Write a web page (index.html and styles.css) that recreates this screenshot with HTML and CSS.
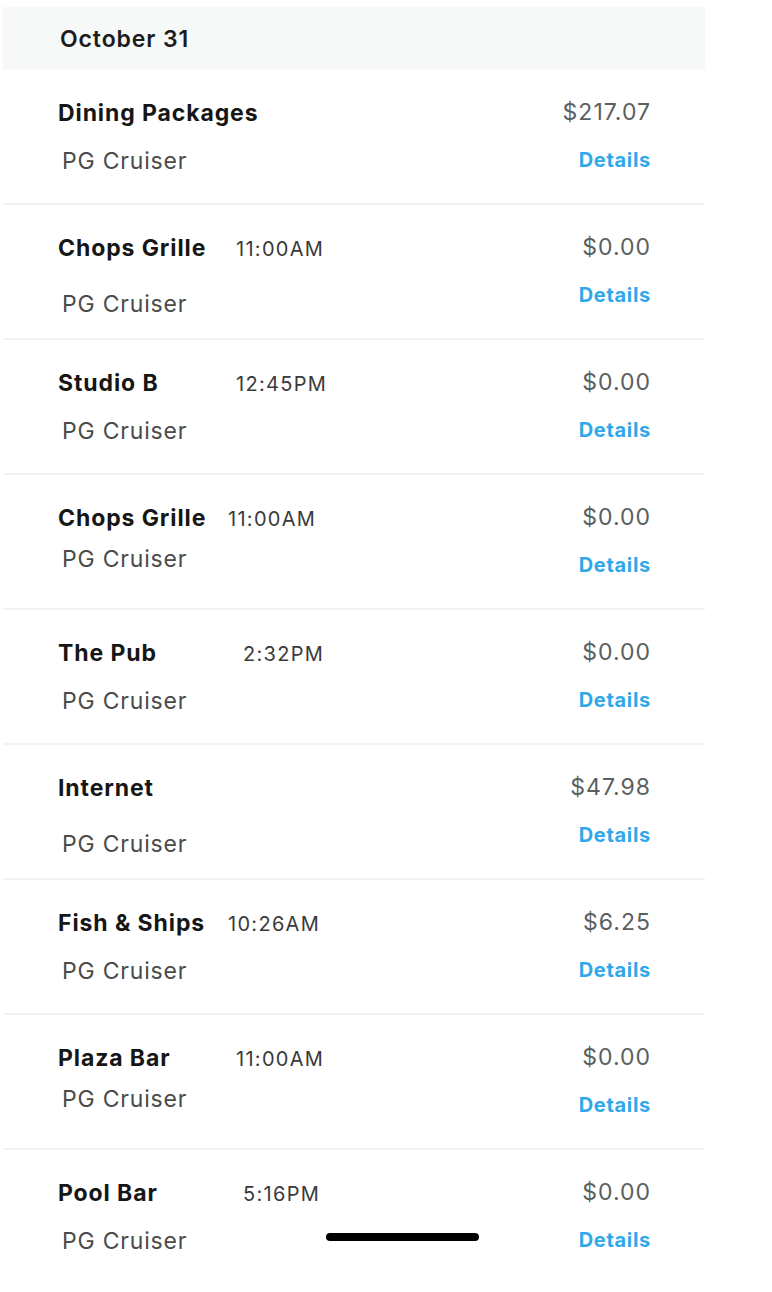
FILE: index.html
```html
<!DOCTYPE html>
<html lang="en">
<head>
<meta charset="utf-8">
<title>Charges</title>
<link rel="stylesheet" href="styles.css">
</head>
<body>
<div class="list">
  <div class="day-header">October 31</div>

  <div class="row">
    <div class="left">
      <div class="line1"><span class="name">Dining Packages</span></div>
      <div class="sub gap-n">PG Cruiser</div>
    </div>
    <div class="right">
      <div class="price">$217.07</div>
      <a class="details">Details</a>
    </div>
  </div>

  <div class="row">
    <div class="left">
      <div class="line1"><span class="name w-a">Chops Grille</span><span class="time">11:00AM</span></div>
      <div class="sub gap-l">PG Cruiser</div>
    </div>
    <div class="right">
      <div class="price">$0.00</div>
      <a class="details">Details</a>
    </div>
  </div>

  <div class="row">
    <div class="left">
      <div class="line1"><span class="name w-a">Studio B</span><span class="time">12:45PM</span></div>
      <div class="sub gap-n">PG Cruiser</div>
    </div>
    <div class="right">
      <div class="price">$0.00</div>
      <a class="details">Details</a>
    </div>
  </div>

  <div class="row">
    <div class="left">
      <div class="line1"><span class="name w-b">Chops Grille</span><span class="time">11:00AM</span></div>
      <div class="sub gap-s">PG Cruiser</div>
    </div>
    <div class="right">
      <div class="price">$0.00</div>
      <a class="details">Details</a>
    </div>
  </div>

  <div class="row">
    <div class="left">
      <div class="line1"><span class="name w-c">The Pub</span><span class="time">2:32PM</span></div>
      <div class="sub gap-n">PG Cruiser</div>
    </div>
    <div class="right">
      <div class="price">$0.00</div>
      <a class="details">Details</a>
    </div>
  </div>

  <div class="row">
    <div class="left">
      <div class="line1"><span class="name">Internet</span></div>
      <div class="sub gap-l">PG Cruiser</div>
    </div>
    <div class="right">
      <div class="price">$47.98</div>
      <a class="details">Details</a>
    </div>
  </div>

  <div class="row">
    <div class="left">
      <div class="line1"><span class="name w-b">Fish &amp; Ships</span><span class="time">10:26AM</span></div>
      <div class="sub gap-n">PG Cruiser</div>
    </div>
    <div class="right">
      <div class="price">$6.25</div>
      <a class="details">Details</a>
    </div>
  </div>

  <div class="row">
    <div class="left">
      <div class="line1"><span class="name w-a">Plaza Bar</span><span class="time">11:00AM</span></div>
      <div class="sub gap-s">PG Cruiser</div>
    </div>
    <div class="right">
      <div class="price">$0.00</div>
      <a class="details">Details</a>
    </div>
  </div>

  <div class="row last">
    <div class="left">
      <div class="line1"><span class="name w-c">Pool Bar</span><span class="time">5:16PM</span></div>
      <div class="sub gap-n">PG Cruiser</div>
    </div>
    <div class="right">
      <div class="price">$0.00</div>
      <a class="details">Details</a>
    </div>
  </div>
</div>
<div class="home-indicator"></div>
</body>
</html>
```
FILE: styles.css
```css
html, body {
  margin: 0;
  padding: 0;
  background: #ffffff;
}

body {
  font-family: "Inter", "Liberation Sans", sans-serif;
  color: #1a1a1a;
  position: relative;
  min-height: 1292px;
}

.list {
  margin: 7px 0 0 3px;
  width: 702px;
}

.day-header {
  height: 63px;
  background: #f7f8f8;
  display: flex;
  align-items: center;
  padding-left: 57px;
  font-size: 23px;
  font-weight: 600;
  letter-spacing: 0.9px;
  color: #1c1c1c;
}

.row {
  height: 133px;
  border-bottom: 2px solid #f1f2f2;
  display: flex;
  justify-content: space-between;
  padding: 0 55px;
}

.row.last {
  border-bottom-color: transparent;
}

.left {
  display: flex;
  flex-direction: column;
  padding-top: 29px;
}

.line1 {
  display: flex;
  align-items: baseline;
  line-height: 28px;
  height: 28px;
}

.name {
  font-size: 23px;
  font-weight: 700;
  letter-spacing: 0.9px;
  color: #161616;
  white-space: nowrap;
}

.name.w-a { width: 178px; }
.name.w-b { width: 170px; }
.name.w-c { width: 185px; }

.time {
  font-size: 20px;
  letter-spacing: 1.3px;
  color: #3a3a3a;
}

.sub {
  padding-left: 4px;
  font-size: 23px;
  line-height: 28px;
  letter-spacing: 0.8px;
  color: #4b4b4b;
}

.sub.gap-s { margin-top: 13px; }
.sub.gap-n { margin-top: 20px; }
.sub.gap-l { margin-top: 28px; }

.right {
  display: flex;
  flex-direction: column;
  align-items: flex-end;
  padding-top: 28px;
}

.price {
  font-size: 23px;
  line-height: 28px;
  letter-spacing: 1px;
  margin-right: -1px;
  color: #5a5f60;
}

.details {
  margin-top: 22px;
  margin-right: -1px;
  font-size: 20px;
  line-height: 24px;
  font-weight: 700;
  letter-spacing: 0.7px;
  color: #2ea8ea;
}

.home-indicator {
  position: absolute;
  left: 326px;
  top: 1233px;
  width: 153px;
  height: 8px;
  border-radius: 4px;
  background: #000000;
}
```
